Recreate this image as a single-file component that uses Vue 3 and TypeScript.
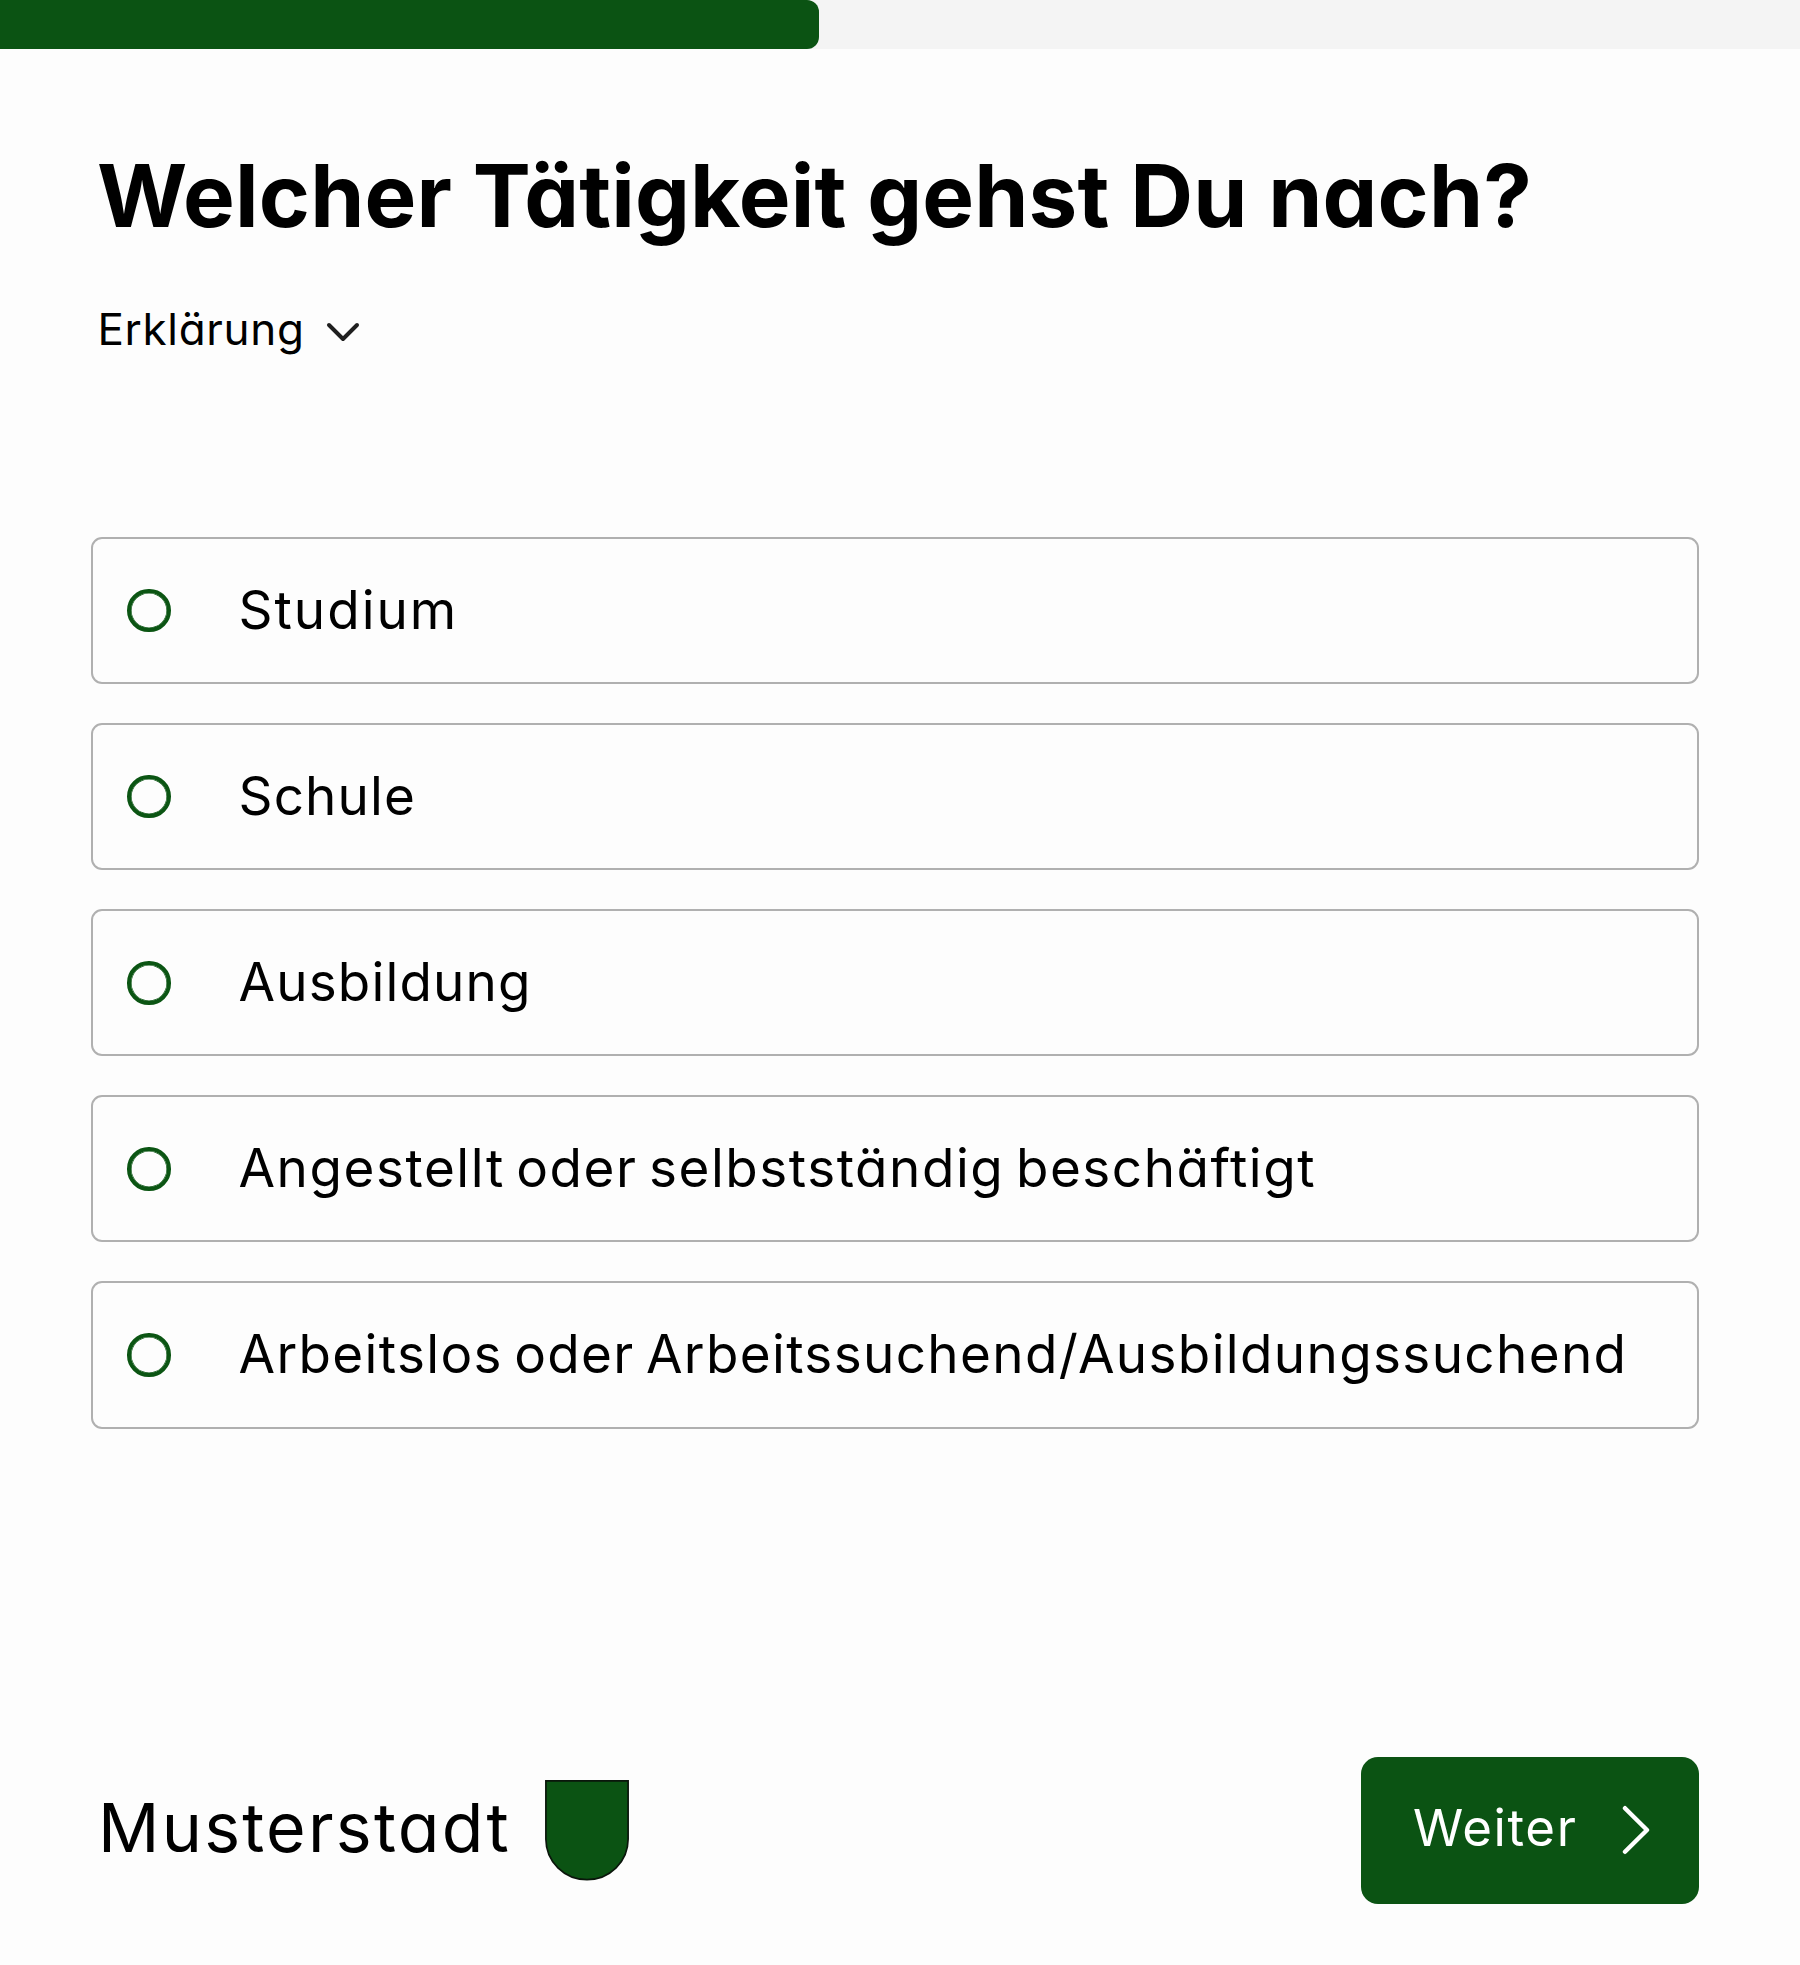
<script setup lang="ts">
import { ref } from 'vue'

interface Option {
  id: string
  label: string
}

const progress = 45.5
const options: Option[] = [
  { id: 'studium', label: 'Studium' },
  { id: 'schule', label: 'Schule' },
  { id: 'ausbildung', label: 'Ausbildung' },
  { id: 'beschaeftigt', label: 'Angestellt oder selbstständig beschäftigt' },
  { id: 'arbeitslos', label: 'Arbeitslos oder Arbeitssuchend/Ausbildungssuchend' },
]
const selected = ref<string | null>(null)
</script>

<template>
  <div class="page">
    <div class="progress">
      <div class="progress-value" :style="{ width: progress + '%' }"></div>
    </div>

    <main class="content">
      <h1 class="title">Welcher Tätigkeit gehst Du nach?</h1>

      <button class="explain" type="button">
        <span class="explain-label">Erklärung</span>
        <svg class="explain-icon" width="36" height="22" viewBox="0 0 36 22" fill="none">
          <path d="M4 4L18 18L32 4" stroke="#1f1f1f" stroke-width="4" stroke-linecap="round" stroke-linejoin="round" />
        </svg>
      </button>

      <div class="options" role="radiogroup">
        <label v-for="option in options" :key="option.id" class="option" :class="option.id">
          <input v-model="selected" class="radio" type="radio" name="taetigkeit" :value="option.id" />
          <span class="option-label">{{ option.label }}</span>
        </label>
      </div>
    </main>

    <footer class="footer">
      <div class="brand">
        <span class="brand-name">Musterstadt</span>
        <svg class="crest" width="84" height="101" viewBox="0 0 84 101">
          <path d="M0.9 0.9H83.1V59.3A41.1 40.4 0 0 1 0.9 59.3Z" fill="#0b5313" stroke="#0a160b" stroke-width="1.7" />
        </svg>
      </div>
      <button class="next" type="button">
        <span class="next-label">Weiter</span>
        <svg class="next-icon" width="28" height="50" viewBox="0 0 28 50" fill="none">
          <path d="M3 3.2L25 25L3 46.8" stroke="#fff" stroke-width="4.4" stroke-linecap="round" stroke-linejoin="round" />
        </svg>
      </button>
    </footer>
  </div>
</template>

<style>
body {
  background: #fdfdfd;
}
</style>

<style scoped>
.page {
  display: flex;
  flex-direction: column;
  box-sizing: border-box;
  width: 1800px;
  height: 1965px;
  overflow: hidden;
  background: #fdfdfd;
  color: #000;
  font-family: Inter, 'Liberation Sans', sans-serif;
  font-feature-settings: 'cv11';
  white-space: nowrap;
}

.progress {
  flex: none;
  height: 49px;
  background: #f4f4f4;
}

.progress-value {
  height: 100%;
  border-radius: 0 12px 12px 0;
  background: #0b5313;
}

.content {
  display: flex;
  flex-direction: column;
  align-items: flex-start;
  padding: 95px 101.5px 0 91px;
}

.title {
  margin: 0 0 0 6px;
  font-size: 87px;
  font-weight: 700;
  line-height: 104px;
  letter-spacing: 0.15px;
}

.explain {
  display: flex;
  align-items: center;
  gap: 20px;
  margin: 55px 0 0 6.4px;
  padding: 0;
  border: 0;
  background: none;
  color: inherit;
  font: inherit;
  font-feature-settings: inherit;
}

.explain-label {
  font-size: 44px;
  line-height: 52px;
  letter-spacing: 0.7px;
}

.explain-icon {
  margin-top: 5px;
}

.options {
  display: flex;
  flex-direction: column;
  align-self: stretch;
  gap: 38.9px;
  margin-top: 182px;
}

.option {
  display: flex;
  align-items: center;
  box-sizing: border-box;
  height: 147.2px;
  padding-left: 34px;
  border: 2px solid #b0b0b0;
  border-radius: 11px;
}

.radio {
  flex: none;
  box-sizing: border-box;
  width: 43.5px;
  height: 43.5px;
  margin: 0;
  appearance: none;
  border: 4px solid #0b5513;
  border-radius: 50%;
  box-shadow: inset 0 0 0 0.6px #0b5513;
}

.radio:checked {
  background: radial-gradient(#0b5513 45%, transparent 50%);
}

.option-label {
  margin-left: 68px;
  padding-bottom: 2px;
  font-size: 53px;
  line-height: 64px;
  letter-spacing: 1.15px;
  word-spacing: -5px;
}

.studium .option-label {
  letter-spacing: 2px;
}

.beschaeftigt .option-label {
  letter-spacing: 1.55px;
}

.arbeitslos .option-label {
  letter-spacing: 1.35px;
}

.footer {
  display: flex;
  align-items: center;
  justify-content: space-between;
  margin-top: auto;
  padding: 0 101.5px 61.5px 98px;
}

.brand {
  display: flex;
  align-items: center;
}

.brand-name {
  padding-bottom: 6px;
  font-size: 68px;
  line-height: 82px;
  letter-spacing: 2.25px;
}

.crest {
  margin-left: 33.5px;
}

.next {
  display: flex;
  align-items: center;
  justify-content: space-between;
  box-sizing: border-box;
  width: 337.5px;
  height: 147px;
  padding: 0 48.5px 0 52px;
  border: 0;
  border-radius: 17px;
  background: #0b5313;
  color: #fff;
  font: inherit;
  font-feature-settings: inherit;
}

.next-label {
  padding-bottom: 4px;
  font-size: 51px;
  line-height: 60px;
  letter-spacing: 1.6px;
}
</style>
